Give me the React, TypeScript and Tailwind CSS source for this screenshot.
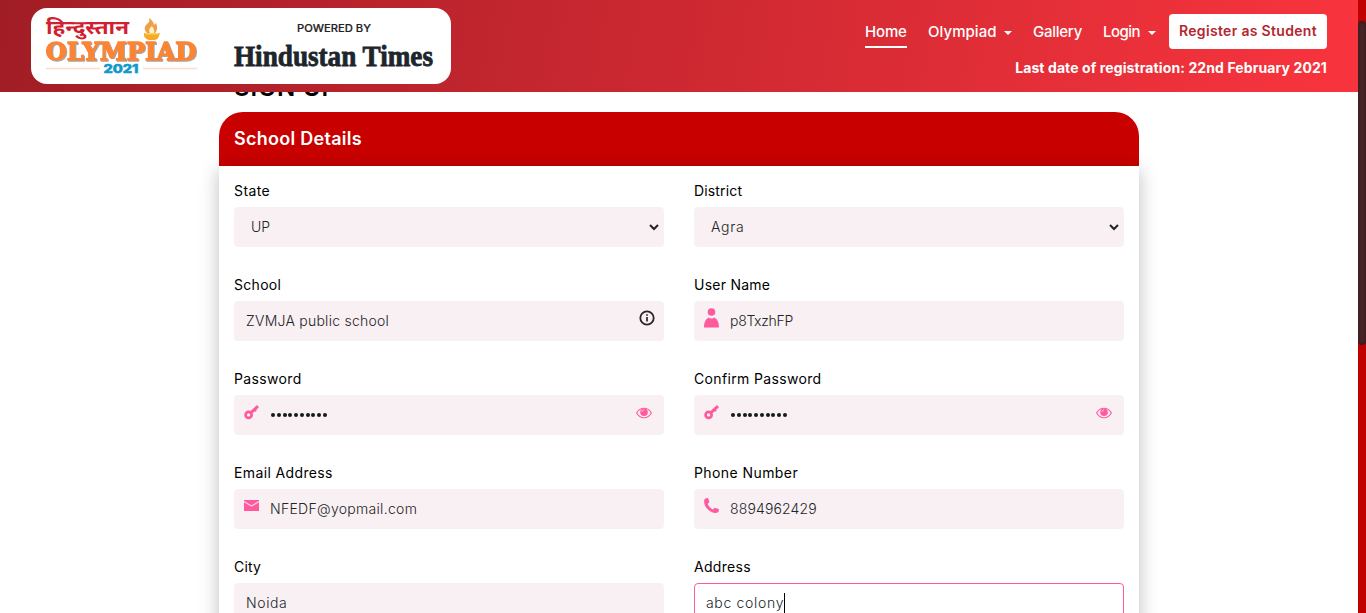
import type { ReactNode } from "react";

function Caret() {
  return <span className="h-0 w-0 shrink-0 border-x-4 border-t-4 border-x-transparent border-t-white" />;
}

function OlympiadLogo() {
  return (
    <svg width="160" height="66" viewBox="0 0 160 66" className="shrink-0">
      <text x="3" y="18" fontFamily="'Noto Sans Devanagari', 'Noto Sans', sans-serif" fontWeight="700" fontSize="19" fill="#d21f33" textLength="83" lengthAdjust="spacingAndGlyphs">हिन्दुस्तान</text>
      <text x="2.500" y="44" className="drop-shadow-[1px_1px_0.5px_rgba(0,0,0,0.35)]" fontFamily="'DejaVu Serif', serif" fontWeight="700" fontSize="25" fill="#fb8534" stroke="#fb8534" strokeWidth="1.300" textLength="151" lengthAdjust="spacingAndGlyphs">OLYMPIAD</text>
      <path d="M104 17c-4-4-2-7 0-9 2-2 3-3 2-6 4 3 5 5 5 7l2-2c2 4 1 8-1 10z" fill="#eda04a" />
      <path d="M107 17c-2-3 0-5 2-7 1 2 3 4 2 7z" fill="#fff0c8" />
      <path d="M101 17h16l-1 3c-1 3-3 4-5 4h-4c-3 0-5-2-6-4z" fill="#f7a928" />
      <path d="M102 17h14v1.500h-14z" fill="#ffd05b" />
      <path d="M3 52.500h54M100 52.500h54" stroke="#fbdccd" strokeWidth="1.400" />
      <text x="60.500" y="56.500" fontFamily="Inter, sans-serif" fontWeight="800" fontSize="12" fill="#1199cc" stroke="#1199cc" strokeWidth=".5" textLength="35" lengthAdjust="spacingAndGlyphs">2021</text>
    </svg>
  );
}

function TimesLogo() {
  return (
    <svg width="206" height="60" viewBox="0 0 206 60" className="shrink-0">
      <text x="64" y="14" fontFamily="Inter, sans-serif" fontWeight="500" fontSize="10.500" fill="#222" stroke="#222" strokeWidth=".2" textLength="74" lengthAdjust="spacingAndGlyphs">POWERED BY</text>
      <text x="1" y="47.500" fontFamily="'Liberation Serif', serif" fontWeight="700" fontSize="30" fill="#1c262c" stroke="#1c262c" strokeWidth=".8" textLength="199" lengthAdjust="spacingAndGlyphs">Hindustan Times</text>
    </svg>
  );
}

function UserIcon() {
  return (
    <svg width="15" height="20" viewBox="0 0 15 20" fill="#ff5a9d">
      <circle cx="7.500" cy="4" r="3.800" />
      <path d="M0 19.500C0 14 2 11 4.500 9.500c1 .7 2 .9 3 .9s2-.2 3-.9C13 11 15 14 15 19.500z" />
    </svg>
  );
}

function KeyIcon() {
  return (
    <svg width="15" height="15" viewBox="0 0 15 15" fill="none" stroke="#ff5a9d">
      <circle cx="4.600" cy="9.900" r="3" strokeWidth="2.700" />
      <path d="M6.700 7.900 14 1.200" strokeWidth="3" />
      <path d="m10.300 4.600 1.600 1.700" strokeWidth="2.200" />
    </svg>
  );
}

function MailIcon() {
  return (
    <svg width="15" height="11" viewBox="0 0 15 11">
      <path d="M0 0h15v11H0z" fill="#ff5a9d" />
      <path d="M0 1.600 7.500 6 15 1.600" fill="none" stroke="#fbd3e3" strokeWidth="1.200" />
    </svg>
  );
}

function PhoneIcon() {
  return (
    <svg width="15" height="15" viewBox="0 0 15 15" fill="#ff5a9d">
      <path d="M.2 2.400C.6.800 2.200 0 3.400.1c.6.100.8.500 1 1l.8 2.500c.2.700-.1 1.100-.6 1.500l-.9.700c.8 2.500 2.700 4.600 5.300 5.600l.8-1c.4-.5.900-.7 1.500-.5l2.600.8c.7.200 1.100.6 1.100 1.200-.1 1.600-1.300 2.900-3 3.100C5.500 15-.5 8.500.2 2.400z" />
    </svg>
  );
}

function EyeIcon() {
  return (
    <svg width="16" height="12" viewBox="0 0 16 12" fill="none">
      <path d="M.6 6C2.300 3 5 1.300 8 1.300S13.700 3 15.400 6C13.700 9 11 10.700 8 10.700S2.300 9 .6 6z" stroke="#ff5a9d" strokeWidth="1.100" />
      <circle cx="8" cy="5.200" r="3.800" fill="#ff5a9d" />
      <path d="M5.900 5c0-1.200.9-2.100 2.100-2.100" stroke="#ffe0ec" strokeWidth=".8" />
    </svg>
  );
}

function InfoIcon() {
  return (
    <svg width="16" height="16" viewBox="0 0 16 16" fill="none" stroke="#292529">
      <circle cx="8" cy="8" r="6.700" strokeWidth="1.800" />
      <path d="M8 7v4.500M8 4.200v1.500" strokeWidth="1.700" />
    </svg>
  );
}

function Chevron() {
  return (
    <svg width="10" height="7" viewBox="0 0 10 7" fill="none">
      <path d="m1 1 4 4 4-4" stroke="#212529" strokeWidth="2" />
    </svg>
  );
}

type FieldProps = { label: string; labelClass: string; box?: string; children: ReactNode };

function Field({ label, labelClass, box = "border-[#f9f0f3] bg-[#f9f0f3]", children }: FieldProps) {
  return (
    <div className="h-[94px]">
      <div className={`h-[29px] text-[14px] leading-[25px] whitespace-nowrap text-black ${labelClass}`}>{label}</div>
      <div className={`flex h-10 items-center rounded border text-[14px] leading-[18px] whitespace-nowrap text-[#212529] ${box}`}>{children}</div>
    </div>
  );
}

function Dots() {
  return (
    <div className="ml-[11px] flex flex-1 gap-[1.750px] pl-px">
      {Array.from({ length: 10 }, (_, i) => (
        <span key={i} className="size-1 rounded-full bg-[#161a1d]" />
      ))}
    </div>
  );
}

function PasswordBox() {
  return (
    <>
      <span className="-mt-1.5 ml-[9px]"><KeyIcon /></span>
      <Dots />
      <span className="-mt-1 mr-[11px]"><EyeIcon /></span>
    </>
  );
}

export default function App() {
  return (
    <div className="flex h-[613px] w-[1366px] overflow-hidden bg-white font-['Inter','Liberation_Sans',sans-serif]">
      <div className="flex w-[1358px] flex-col">
        <header className="z-10 flex h-[92px] shrink-0 justify-between bg-[linear-gradient(100deg,#a11d25_0%,#f9343e_100%)] pr-[31px] pl-[31px]">
          <div className="mt-2 flex h-[76px] w-[420px] rounded-[16px] bg-white pt-2 pl-3">
            <OlympiadLogo />
            <div className="ml-[30px] pt-0.5"><TimesLogo /></div>
          </div>
          <div className="flex flex-col items-end pt-[14px] text-white">
            <nav className="flex h-[35px] items-center text-[15px] font-medium whitespace-nowrap">
              <div className="mr-[21px] flex h-[32px] w-[42px] items-center border-b-2 border-white pt-1 tracking-[-0.150px]">Home</div>
              <div className="mr-[21px] flex w-[84px] items-center justify-between pt-0.5 tracking-[0.050px]">Olympiad<Caret /></div>
              <div className="mr-[21px] w-[49px] pt-0.5 tracking-[-0.250px]">Gallery</div>
              <div className="mr-[13px] flex w-[53px] items-center justify-between pt-0.5 tracking-[-0.500px]">Login<Caret /></div>
              <div className="flex h-[35px] w-[158px] items-center justify-center rounded bg-white pb-0.5 text-[14px] font-semibold tracking-[0.320px] text-[#b3272f]">Register as Student</div>
            </nav>
            <div className="mt-[8px] text-[14px] leading-[22px] font-bold tracking-[0.100px] whitespace-nowrap">Last date of registration: 22nd February 2021</div>
          </div>
        </header>
        <main className="ml-[219px] w-[920px]">
          <h1 className="-mt-[22px] h-[42px] pl-[15px] text-[24px] leading-9 font-semibold tracking-[0.900px] text-black">SIGN UP</h1>
          <div className="flex h-[54px] items-center rounded-t-[24px] bg-[#c90000] pb-0.5 pl-[15px] text-[18px] font-semibold tracking-[0.270px] text-white">School Details</div>
          <section className="grid grid-cols-2 gap-x-[30px] bg-white px-[15px] pt-3 shadow-[0_4px_18px_rgba(0,0,0,0.26)]">
            <Field label="State" labelClass="tracking-[0.400px]">
              <span className="mb-px ml-4 flex-1 font-light">UP</span><span className="mr-1"><Chevron /></span>
            </Field>
            <Field label="District" labelClass="tracking-[0.150px]">
              <span className="mb-px ml-4 flex-1 font-light tracking-[0.700px]">Agra</span><span className="mr-1"><Chevron /></span>
            </Field>
            <Field label="School" labelClass="tracking-[0.300px]">
              <span className="mb-px ml-[11px] flex-1 font-light tracking-[0.250px]">ZVMJA public school</span><span className="-mt-[7px] mr-[8.500px]"><InfoIcon /></span>
            </Field>
            <Field label="User Name" labelClass="tracking-[0.250px]">
              <span className="-mt-1.5 ml-[9px]"><UserIcon /></span><span className="mb-px ml-[11px] font-light tracking-[-0.300px]">p8TxzhFP</span>
            </Field>
            <Field label="Password" labelClass="tracking-[0.350px]"><PasswordBox /></Field>
            <Field label="Confirm Password" labelClass="tracking-[0.350px]"><PasswordBox /></Field>
            <Field label="Email Address" labelClass="tracking-[0.370px]">
              <span className="-mt-2 ml-[9px]"><MailIcon /></span><span className="mb-px ml-[11px] font-light tracking-[0.300px]">NFEDF@yopmail.com</span>
            </Field>
            <Field label="Phone Number" labelClass="tracking-[0.420px]">
              <span className="-mt-2 ml-[9px]"><PhoneIcon /></span><span className="mb-px ml-[11px] font-light tracking-[0.150px]">8894962429</span>
            </Field>
            <Field label="City" labelClass="tracking-[0.200px]">
              <span className="mb-px ml-[11px] font-light tracking-[0.600px]">Noida</span>
            </Field>
            <Field label="Address" labelClass="tracking-[0.300px]" box="border-[#ff5a9d] bg-white">
              <span className="mb-px ml-[11px] font-light tracking-[0.680px]">abc colony</span><span className="h-5 w-px bg-black" />
            </Field>
          </section>
        </main>
      </div>
      <div className="w-2 bg-[#c00000] pt-[21px]">
        <div className="h-[324px] rounded-full bg-[#492527] shadow-[inset_0_0_4px_rgba(0,0,0,0.4)]" />
      </div>
    </div>
  );
}
